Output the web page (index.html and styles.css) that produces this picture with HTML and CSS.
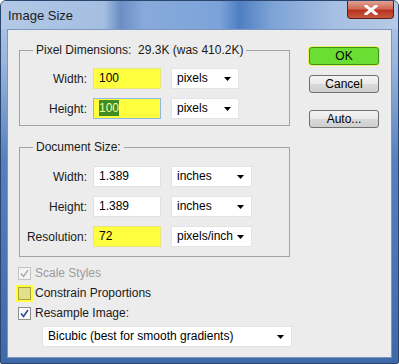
FILE: index.html
```html
<!DOCTYPE html>
<html lang="en">
<head>
  <meta charset="UTF-8">
  <title>Image Size</title>
  <link rel="stylesheet" href="styles.css">
</head>
<body>
  <div class="window">
    <div class="titlebar">
      <span class="title">Image Size</span>
      <div class="close-btn">
        <svg width="14" height="10" viewBox="0 0 14 10">
          <path d="M2 1 L12 9 M12 1 L2 9" stroke="#fff" stroke-width="3" stroke-linecap="square"/>
        </svg>
      </div>
    </div>

    <div class="client">
      <div class="left-col">
        <fieldset class="group group-pixels">
          <legend>Pixel Dimensions:&nbsp; 29.3K (was 410.2K)</legend>
          <div class="row">
            <span class="label">Width:</span>
            <div class="field yellow">100</div>
            <div class="select small">pixels
              <svg class="arrow" width="7" height="4" viewBox="0 0 7 4"><path d="M0 0 H7 L3.5 4 Z" fill="#000"/></svg>
            </div>
          </div>
          <div class="row">
            <span class="label">Height:</span>
            <div class="field yellow focused"><span class="selected">100</span></div>
            <div class="select small">pixels
              <svg class="arrow" width="7" height="4" viewBox="0 0 7 4"><path d="M0 0 H7 L3.5 4 Z" fill="#000"/></svg>
            </div>
          </div>
        </fieldset>

        <fieldset class="group group-doc">
          <legend>Document Size:</legend>
          <div class="row">
            <span class="label">Width:</span>
            <div class="field">1.389</div>
            <div class="select">inches
              <svg class="arrow" width="7" height="4" viewBox="0 0 7 4"><path d="M0 0 H7 L3.5 4 Z" fill="#000"/></svg>
            </div>
          </div>
          <div class="row">
            <span class="label">Height:</span>
            <div class="field">1.389</div>
            <div class="select">inches
              <svg class="arrow" width="7" height="4" viewBox="0 0 7 4"><path d="M0 0 H7 L3.5 4 Z" fill="#000"/></svg>
            </div>
          </div>
          <div class="row">
            <span class="label">Resolution:</span>
            <div class="field yellow">72</div>
            <div class="select">pixels/inch
              <svg class="arrow" width="7" height="4" viewBox="0 0 7 4"><path d="M0 0 H7 L3.5 4 Z" fill="#000"/></svg>
            </div>
          </div>
        </fieldset>

        <div class="checks">
          <div class="check disabled">
            <span class="box">
              <svg width="9" height="9" viewBox="0 0 9 9"><path d="M1 4.5 L3.5 7.5 L8 1" stroke="#b0b0b0" stroke-width="1.6" fill="none"/></svg>
            </span>
            Scale Styles
          </div>
          <div class="check">
            <span class="box yellow-box"></span>
            Constrain Proportions
          </div>
          <div class="check">
            <span class="box">
              <svg width="9" height="9" viewBox="0 0 9 9"><path d="M1 4.5 L3.5 7.5 L8 1" stroke="#2a4b9b" stroke-width="1.6" fill="none"/></svg>
            </span>
            Resample Image:
          </div>
        </div>

        <div class="select wide">Bicubic (best for smooth gradients)
          <svg class="arrow" width="7" height="4" viewBox="0 0 7 4"><path d="M0 0 H7 L3.5 4 Z" fill="#000"/></svg>
        </div>
      </div>

      <div class="right-col">
        <div class="btn btn-ok">OK</div>
        <div class="btn">Cancel</div>
        <div class="btn btn-auto">Auto...</div>
      </div>
    </div>
  </div>
</body>
</html>
```

FILE: styles.css
```css
body {
  margin: 0;
  font-family: "Liberation Sans", Arial, sans-serif;
  font-size: 12px;
  color: #1a1a1a;
  background: #ffffff;
}
.window {
  width: 399px;
  height: 364px;
  box-sizing: border-box;
  border: 1px solid #2b466e;
  border-radius: 6px 6px 2px 2px;
  padding: 0 6px 5px 6px;
  background: linear-gradient(180deg, #b4c9e6 0, #9ab6dd 60px, #5580bd 160px, #3f69a8 100%);
  display: flex;
  flex-direction: column;
}
.titlebar {
  height: 28px;
  margin: 0 -6px;
  padding: 0 4px 0 7px;
  display: flex;
  align-items: flex-start;
  border-radius: 5px 5px 0 0;
  background: linear-gradient(90deg, #b3c9e6 0%, #a4bee2 26%, #6a8ec5 30%, #88aadb 36%, #7ca3d9 55%, #4f7fc1 60%, #7ca2d6 68%, #a6bfe2 84%, #b6cae6 100%);
}
.title {
  margin-top: 7px;
  font-size: 13px;
  color: #1c1c1c;
}
.close-btn {
  margin-left: auto;
  width: 47px;
  height: 18px;
  box-sizing: border-box;
  border: 1px solid #5d1e17;
  border-top: none;
  border-radius: 0 0 4px 4px;
  background: linear-gradient(180deg, #e0a193 0%, #cf6a58 45%, #b8321f 55%, #c75a3f 100%);
  display: flex;
  align-items: center;
  justify-content: center;
}
.client {
  flex: 1;
  background: #ececec;
  border: 1px solid #7d96bd;
  display: flex;
  padding-left: 11px;
}
.left-col {
  width: 273px;
}
.right-col {
  margin-left: 17px;
  padding-top: 17px;
  display: flex;
  flex-direction: column;
}
.group {
  margin: 0;
  width: 271px;
  box-sizing: border-box;
  border: 1px solid #a2a2a2;
  padding: 0;
}
.group legend {
  margin-left: 13px;
  padding: 0 3px;
  line-height: 14px;
}
.group-pixels {
  margin-top: 13px;
  padding: 11px 0 6px 0;
}
.group-doc {
  margin-top: 14px;
  padding: 12px 0 9px 0;
}
.row {
  display: flex;
  align-items: center;
  height: 21px;
}
.row + .row {
  margin-top: 9px;
}
.label {
  width: 67px;
  text-align: right;
  margin-right: 6px;
}
.field {
  width: 68px;
  height: 21px;
  box-sizing: border-box;
  background: #ffffff;
  border: 1px solid #e2e2e2;
  padding-left: 5px;
  line-height: 19px;
  font-size: 12px;
  color: #000;
}
.field.yellow {
  background: #ffff40;
  border-color: #e6e67a;
}
.field.focused {
  border-color: #8fb7e0;
}
.selected {
  background: #3f8c22;
  color: #f4ff9c;
  padding: 1px 0;
}
.select {
  position: relative;
  width: 81px;
  height: 21px;
  box-sizing: border-box;
  background: #ffffff;
  border: 1px solid #e4e4e4;
  padding-left: 5px;
  line-height: 19px;
  margin-left: 10px;
  color: #000;
}
.select.small {
  width: 68px;
}
.select .arrow {
  position: absolute;
  right: 7px;
  top: 8px;
}
.select.wide {
  width: 250px;
  margin-left: 23px;
  margin-top: 3px;
}
.checks {
  margin-top: 6px;
}
.check {
  height: 20px;
  display: flex;
  align-items: center;
  margin-left: -1px;
}
.check.disabled {
  color: #9c9c9c;
}
.box {
  width: 13px;
  height: 13px;
  box-sizing: border-box;
  border: 1px solid #8f8f8f;
  background: #fbfbfb;
  margin-right: 4px;
  display: flex;
  align-items: center;
  justify-content: center;
}
.check.disabled .box {
  border-color: #c4c4c4;
  background: #f4f4f4;
}
.box.yellow-box {
  background: #e3e08a;
  border: 1px solid #a8a23a;
  outline: 2px solid #ffff40;
}
.btn {
  width: 70px;
  height: 18px;
  box-sizing: border-box;
  border: 1px solid #707070;
  border-radius: 3px;
  background: linear-gradient(180deg, #f4f4f4 0%, #e8e8e8 50%, #d9d9d9 51%, #cfcfcf 100%);
  text-align: center;
  line-height: 16px;
  color: #000;
}
.btn + .btn {
  margin-top: 10px;
}
.btn.btn-auto {
  margin-top: 17px;
}
.btn.btn-ok {
  background: #6ade32;
  border-color: #3e8f22;
  box-shadow: 0 0 0 1px #e6f060;
}
```
